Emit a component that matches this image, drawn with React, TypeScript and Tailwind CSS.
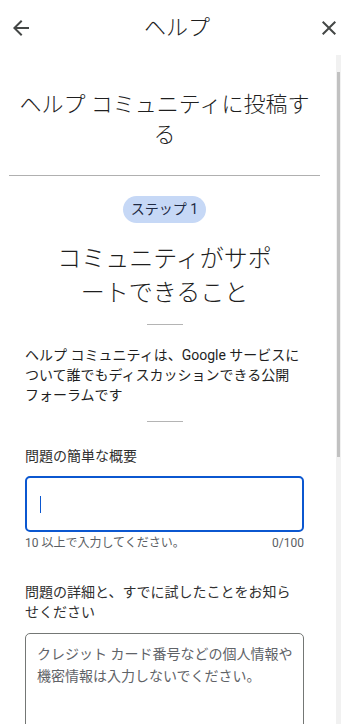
const font = { fontFamily: 'Roboto, "Noto Sans CJK JP", sans-serif' };

function BackIcon() {
  return (
    <svg viewBox="0 0 24 24" className="h-6 w-6 fill-[#444746]">
      <path d="M20 11H7.83l5.59-5.59L12 4l-8 8 8 8 1.41-1.41L7.83 13H20v-2z" />
    </svg>
  );
}

function CloseIcon() {
  return (
    <svg viewBox="0 0 24 24" className="h-6 w-6 fill-[#444746]">
      <path d="M19 6.41L17.59 5 12 10.59 6.41 5 5 6.41 10.59 12 5 17.59 6.41 19 12 13.41 17.59 19 19 17.59 13.41 12z" />
    </svg>
  );
}

function ShortRule() {
  return <div className="mx-auto h-px w-9 bg-[#b4b4b4]" />;
}

export default function App() {
  return (
    <div className="flex h-[724px] w-[341px] flex-col overflow-hidden bg-white text-[#1f1f1f]" style={font}>
      {/* header */}
      <header className="flex h-[55px] shrink-0 items-center justify-between pl-[9px]">
        <BackIcon />
        <h1 className="pl-[4px] text-[22px] leading-none font-light">ヘルプ</h1>
        <CloseIcon />
      </header>

      <div className="flex min-h-0 flex-1">
        <main className="w-[329px] shrink-0">
          <h2 className="pt-[35px] text-center text-[22px] leading-[30px] font-light whitespace-nowrap">
            ヘルプ コミュニティに投稿す
            <br />る
          </h2>

          <div className="mx-[9px] mt-[25px] h-px bg-[#b0b0b0]" />

          <div className="mt-[20px] flex justify-center">
            <span className="flex h-[27px] items-center rounded-full bg-[#c6d8f6] px-[8px] text-[14px] text-[#1f2a44]">
              ステップ 1
            </span>
          </div>

          <h3 className="mt-[19px] text-center text-[24px] leading-[34px] font-light whitespace-nowrap">
            コミュニティがサポ
            <br />
            ートできること
          </h3>

          <div className="mt-[14px]">
            <ShortRule />
          </div>

          <p className="mt-[20px] px-[25px] text-[14px] leading-[20px] whitespace-nowrap">
            ヘルプ コミュニティは、Google サービスに
            <br />
            ついて誰でもディスカッションできる公開
            <br />
            フォーラムです
          </p>

          <div className="mt-[16px]">
            <ShortRule />
          </div>

          <section className="px-[25px]">
            <label className="mt-[24px] block text-[14px] leading-[20px] text-[#303030]">問題の簡単な概要</label>
            <div className="mt-[10px] flex h-[56px] items-center rounded-[5px] border-2 border-[#0b57d0] pl-[13px]">
              <div className="h-[17px] w-px bg-[#0b57d0]" />
            </div>
            <div className="mt-[3px] flex justify-between text-[12px] leading-[16px] text-[#5a5e63]">
              <span>10 以上で入力してください。</span>
              <span>0/100</span>
            </div>

            <label className="mt-[31px] block text-[14px] leading-[20px] whitespace-nowrap text-[#303030]">
              問題の詳細と、すでに試したことをお知ら
              <br />
              せください
            </label>
            <div className="mt-[11px] h-[140px] rounded-[5px] border border-[#747775] pt-[9px] pl-[11px] text-[14px] leading-[22px] whitespace-nowrap text-[#5f6368]">
              クレジット カード番号などの個人情報や
              <br />
              機密情報は入力しないでください。
            </div>
          </section>
        </main>

        {/* scrollbar */}
        <div className="ml-auto w-[5px] shrink-0 bg-[#f1f1f1] pt-[17px]">
          <div className="ml-px h-[385px] w-[3px] bg-[#c1c1c1]" />
        </div>
      </div>
    </div>
  );
}
